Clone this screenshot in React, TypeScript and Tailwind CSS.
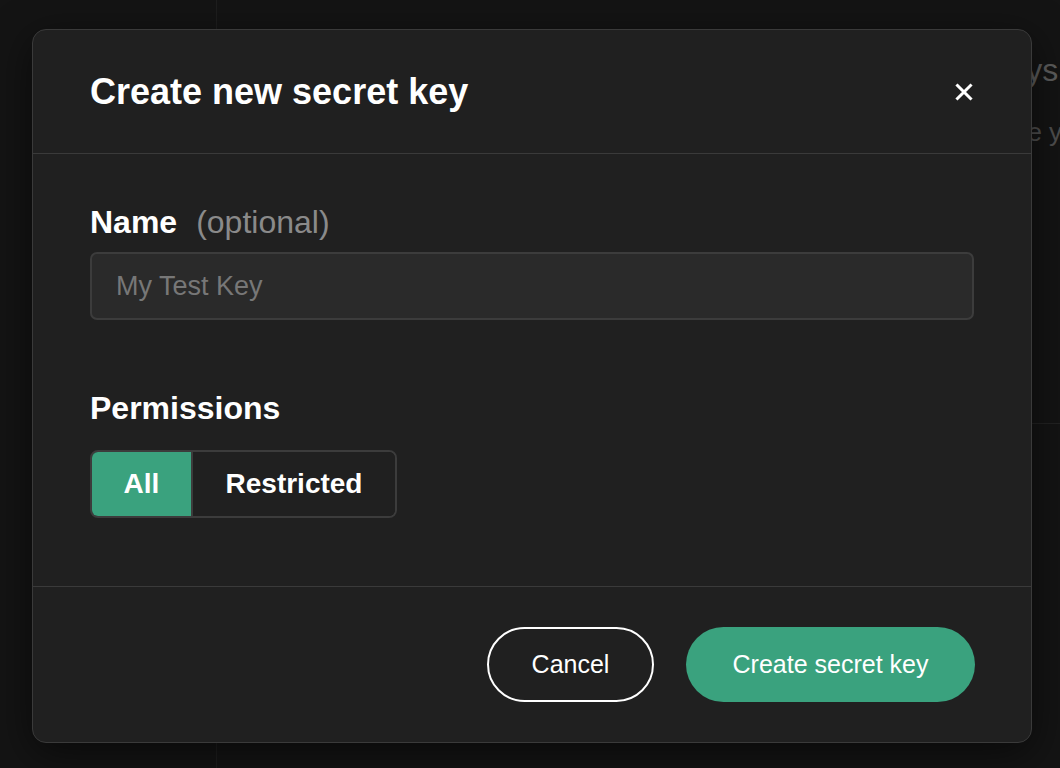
import * as React from "react";

const font = { fontFamily: '"Liberation Sans", Arial, sans-serif' };

function CloseIcon() {
  return (
    <svg width="18" height="18" viewBox="0 0 18 18" fill="none">
      <path d="M2.5 2.5L15.5 15.5M15.5 2.5L2.5 15.5" stroke="white" strokeWidth="3" strokeLinecap="square" />
    </svg>
  );
}

export default function App() {
  const [perm, setPerm] = React.useState<"all" | "restricted">("all");

  return (
    <div className="relative h-[768px] w-[1060px] overflow-hidden bg-[#141414]" style={font}>
      {/* page behind the dialog */}
      <div className="flex h-full">
        <aside className="w-[217px] shrink-0 border-r border-[#1e1e1e]" />
        <main className="flex-1 overflow-hidden">
          <div className="pl-[676px] pt-[50px]">
            <h1 className="ml-[39px] whitespace-nowrap text-[32px] leading-[40px] text-[#5c5c5c]">API keys</h1>
            <p className="mt-[26px] whitespace-nowrap text-[26px] leading-[32px] text-[#4e4e4e]">Do not share your</p>
          </div>
          <div className="mt-[275px] border-t border-[#222]" />
        </main>
      </div>

      {/* dialog */}
      <div className="absolute left-[32px] top-[29px] w-[1000px] rounded-[14px] border border-[#3a3a3a] bg-[#202020] shadow-[0_10px_40px_rgba(0,0,0,0.55)]">
        <div className="flex h-[124px] items-center justify-between border-b border-[#3a3a3a] pl-[57px] pr-[55px]">
          <h2 className="text-[36px] font-bold leading-none text-white">Create new secret key</h2>
          <button className="flex h-[24px] w-[24px] items-center justify-center">
            <CloseIcon />
          </button>
        </div>

        <div className="border-b border-[#3a3a3a] px-[57px] pb-[68px] pt-[48px]">
          <label className="flex items-baseline text-[32px] leading-[40px]">
            <span className="font-bold text-white">Name</span>
            <span className="ml-[19px] text-[#8a8a8a]">(optional)</span>
          </label>
          <input
            placeholder="My Test Key"
            className="mt-[10px] h-[68px] w-full rounded-[7px] border-2 border-[#3c3c3c] bg-[#2a2a2a] px-[24px] text-[27px] text-white outline-none placeholder:text-[#777]"
            style={font}
          />

          <div className="mt-[68px] text-[32px] font-bold leading-[40px] text-white">Permissions</div>
          <div className="mt-[22px] flex h-[68px] w-[307px] overflow-hidden rounded-[8px] border-2 border-[#3c3c3c]">
            <button
              onClick={() => setPerm("all")}
              className={
                "w-[101px] border-r-2 border-[#3c3c3c] text-[28px] font-bold text-white " +
                (perm === "all" ? "bg-[#3aa27e]" : "bg-[#202020]")
              }
              style={font}
            >
              All
            </button>
            <button
              onClick={() => setPerm("restricted")}
              className={
                "flex-1 text-[28px] font-bold text-white " + (perm === "restricted" ? "bg-[#3aa27e]" : "bg-[#202020]")
              }
              style={font}
            >
              Restricted
            </button>
          </div>
        </div>

        <div className="flex h-[155px] items-center justify-end gap-[32px] px-[56px]">
          <button
            className="h-[75px] w-[167px] rounded-full border-2 border-white text-[25px] text-white"
            style={font}
          >
            Cancel
          </button>
          <button className="h-[75px] w-[289px] rounded-full bg-[#3aa27e] text-[25px] text-white" style={font}>
            Create secret key
          </button>
        </div>
      </div>
    </div>
  );
}
